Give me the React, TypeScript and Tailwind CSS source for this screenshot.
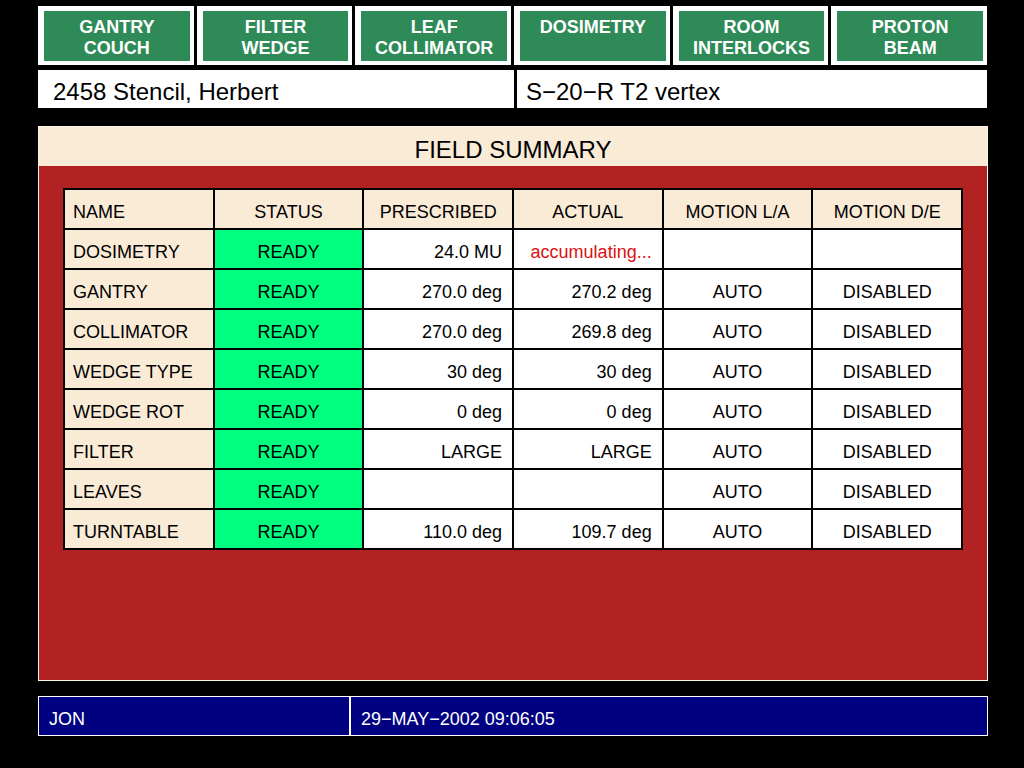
import React from 'react';

// Tasti del menu superiore
const buttons = [
  ['GANTRY', 'COUCH'],
  ['FILTER', 'WEDGE'],
  ['LEAF', 'COLLIMATOR'],
  ['DOSIMETRY'],
  ['ROOM', 'INTERLOCKS'],
  ['PROTON', 'BEAM'],
];

const headers = ['STATUS', 'PRESCRIBED', 'ACTUAL', 'MOTION L/A', 'MOTION D/E'];

const rows: string[][] = [
  ['DOSIMETRY', 'READY', '24.0 MU', 'accumulating...', '', ''],
  ['GANTRY', 'READY', '270.0 deg', '270.2 deg', 'AUTO', 'DISABLED'],
  ['COLLIMATOR', 'READY', '270.0 deg', '269.8 deg', 'AUTO', 'DISABLED'],
  ['WEDGE TYPE', 'READY', '30 deg', '30 deg', 'AUTO', 'DISABLED'],
  ['WEDGE ROT', 'READY', '0 deg', '0 deg', 'AUTO', 'DISABLED'],
  ['FILTER', 'READY', 'LARGE', 'LARGE', 'AUTO', 'DISABLED'],
  ['LEAVES', 'READY', '', '', 'AUTO', 'DISABLED'],
  ['TURNTABLE', 'READY', '110.0 deg', '109.7 deg', 'AUTO', 'DISABLED'],
];

const cell = 'h-[40px] border-r-2 border-b-2 border-black pt-[12px] leading-[20px] whitespace-nowrap';

const App: React.FC = () => {
  return (
    <div
      className="w-[1024px] h-[768px] bg-black text-black overflow-hidden"
      style={{ fontFamily: '"Liberation Sans", Arial, sans-serif' }}
    >
      {/* Menu */}
      <div className="ml-[38px] mt-[6px] w-[949px] flex gap-[3px]">
        {buttons.map((b) => (
          <div key={b.join()} className="flex-1 h-[59px] bg-white pt-[5px] pb-[4px] pl-[6px] pr-[4px]">
            <div className="h-full bg-[#2e8b57] flex flex-col items-center pt-[6px] text-[18px] leading-[21px] font-bold text-white">
              {b.map((l) => (
                <span key={l}>{l}</span>
              ))}
            </div>
          </div>
        ))}
      </div>

      {/* Paziente / campo */}
      <div className="ml-[38px] mt-[5px] w-[949px] flex gap-[3px] h-[38px]">
        <div className="flex-1 bg-white pl-[15px] pt-[8px] text-[24px] leading-[28px]">2458 Stencil, Herbert</div>
        <div className="flex-1 bg-white pl-[9px] pt-[8px] text-[24px] leading-[28px]">S−20−R T2 vertex</div>
      </div>

      {/* Field summary */}
      <div className="ml-[38px] mt-[18px] w-[950px] h-[555px] border border-[#fdf5e6] flex flex-col">
        <div className="h-[39px] bg-[#faebd7] text-center pt-[9px] text-[24px] leading-[28px]">FIELD SUMMARY</div>
        <div className="flex-1 bg-[#b22222] pt-[22px] px-[24px]">
          <div className="w-[900px] grid grid-cols-6 border-t-2 border-l-2 border-black text-[18px]">
            <div className={`${cell} bg-[#faebd7] pl-[8px]`}>NAME</div>
            {headers.map((h) => (
              <div key={h} className={`${cell} bg-[#faebd7] text-center`}>
                {h}
              </div>
            ))}
            {rows.map((r) => (
              <React.Fragment key={r[0]}>
                <div className={`${cell} bg-[#faebd7] pl-[8px]`}>{r[0]}</div>
                <div className={`${cell} bg-[#00ff7f] text-center`}>{r[1]}</div>
                <div className={`${cell} bg-white text-right pr-[10px]`}>{r[2]}</div>
                <div className={`${cell} bg-white text-right pr-[10px] ${r[3] === 'accumulating...' ? 'text-[#dd1111]' : ''}`}>
                  {r[3]}
                </div>
                <div className={`${cell} bg-white text-center`}>{r[4]}</div>
                <div className={`${cell} bg-white text-center`}>{r[5]}</div>
              </React.Fragment>
            ))}
          </div>
        </div>
      </div>

      {/* Barra di stato */}
      <div className="ml-[38px] mt-[15px] w-[950px] h-[40px] border border-white bg-[#000080] flex text-white text-[18px] leading-[20px]">
        <div className="w-[312px] border-r-2 border-white pl-[10px] pt-[12px]">JON</div>
        <div className="flex-1 pl-[10px] pt-[12px]">29−MAY−2002 09:06:05</div>
      </div>
    </div>
  );
};

export default App;
